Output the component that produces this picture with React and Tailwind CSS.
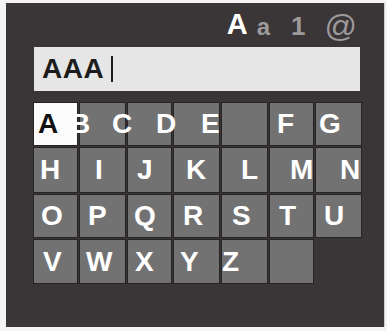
import React from 'react';

const widths = ['w-[43px]', 'w-[45px]', 'w-[43px]', 'w-[45px]', 'w-[45px]', 'w-[43px]', 'w-[45px]'];

// each key: [letter, offset class]
const rows = [
  {
    h: 'h-[42px]',
    keys: [
      ['A', 'ml-[4px]'],
      ['B', 'ml-[-10px]'],
      ['C', 'ml-[-16px]'],
      ['D', 'ml-[-18px]'],
      ['E', 'ml-[-21px]'],
      ['F', 'ml-[7px]'],
      ['G', 'ml-[3px]'],
    ],
  },
  {
    h: 'h-[44px]',
    keys: [
      ['H', 'ml-[6px]'],
      ['I', 'ml-[15px]'],
      ['J', 'ml-[9px]'],
      ['K', 'ml-[12px]'],
      ['L', 'ml-[19px]'],
      ['M', 'ml-[20px]'],
      ['N', 'ml-[24px]'],
    ],
  },
  {
    h: 'h-[42px]',
    keys: [
      ['O', 'ml-[7px]'],
      ['P', 'ml-[8px]'],
      ['Q', 'ml-[6px]'],
      ['R', 'ml-[9px]'],
      ['S', 'ml-[10px]'],
      ['T', 'ml-[9px]'],
      ['U', 'ml-[8px]'],
    ],
  },
  {
    h: 'h-[43px]',
    keys: [
      ['V', 'ml-[9px]'],
      ['W', 'ml-[6px]'],
      ['X', 'ml-[7px]'],
      ['Y', 'ml-[6px]'],
      ['Z', 'ml-[0px]'],
      ['', ''],
    ],
  },
];

export default function App() {
  return (
    <div
      className="w-[387px] h-[331px] bg-[#f4f4f4] pt-[3px] pl-[6px]"
      style={{ fontFamily: '"Liberation Sans", Arial, sans-serif' }}
    >
      <div className="w-[379px] h-[324px] bg-[#3a3536] pl-[28px] border-r border-[#cfcfcf]">
        {/* mode selector */}
        <div className="h-[44px] w-[326px] flex items-end justify-end pr-[3px] pb-[8px]">
          <span className="text-[29px] font-bold text-white leading-none">A</span>
          <span className="text-[24px] font-bold text-[#9c9a9b] leading-none ml-[9px]">a</span>
          <span className="text-[26px] font-bold text-[#9c9a9b] leading-none ml-[21px]">1</span>
          <span className="text-[32px] text-[#9c9a9b] leading-none ml-[19px] mb-[-3px]">@</span>
        </div>

        {/* text field */}
        <div className="w-[326px] h-[44px] bg-[#e6e6e6] flex items-center pl-[8px]">
          <span className="text-[28px] font-bold text-[#1c1c1c] leading-none tracking-[0.5px]">AAA</span>
          <span className="w-[2px] h-[26px] bg-[#1c1c1c] ml-[7px]" />
        </div>

        {/* keyboard */}
        <div className="mt-[12px] flex flex-col gap-[3px]">
          {rows.map((row, ri) => (
            <div key={ri} className={`flex gap-[3px] ${row.h}`}>
              {row.keys.map(([ch, off], ci) => {
                const sel = ri === 0 && ci === 0;
                return (
                  <div
                    key={ci}
                    className={`${widths[ci]} h-full flex items-center ring-1 ring-[#272324] ${
                      sel ? 'bg-[#fbfbfb]' : 'bg-[#737273]'
                    }`}
                  >
                    {ch && (
                      <span
                        className={`relative z-10 whitespace-nowrap text-[28px] font-bold leading-none ${off} ${
                          sel ? 'text-[#111]' : 'text-white'
                        }`}
                      >
                        {ch}
                      </span>
                    )}
                  </div>
                );
              })}
            </div>
          ))}
        </div>
      </div>
    </div>
  );
}
